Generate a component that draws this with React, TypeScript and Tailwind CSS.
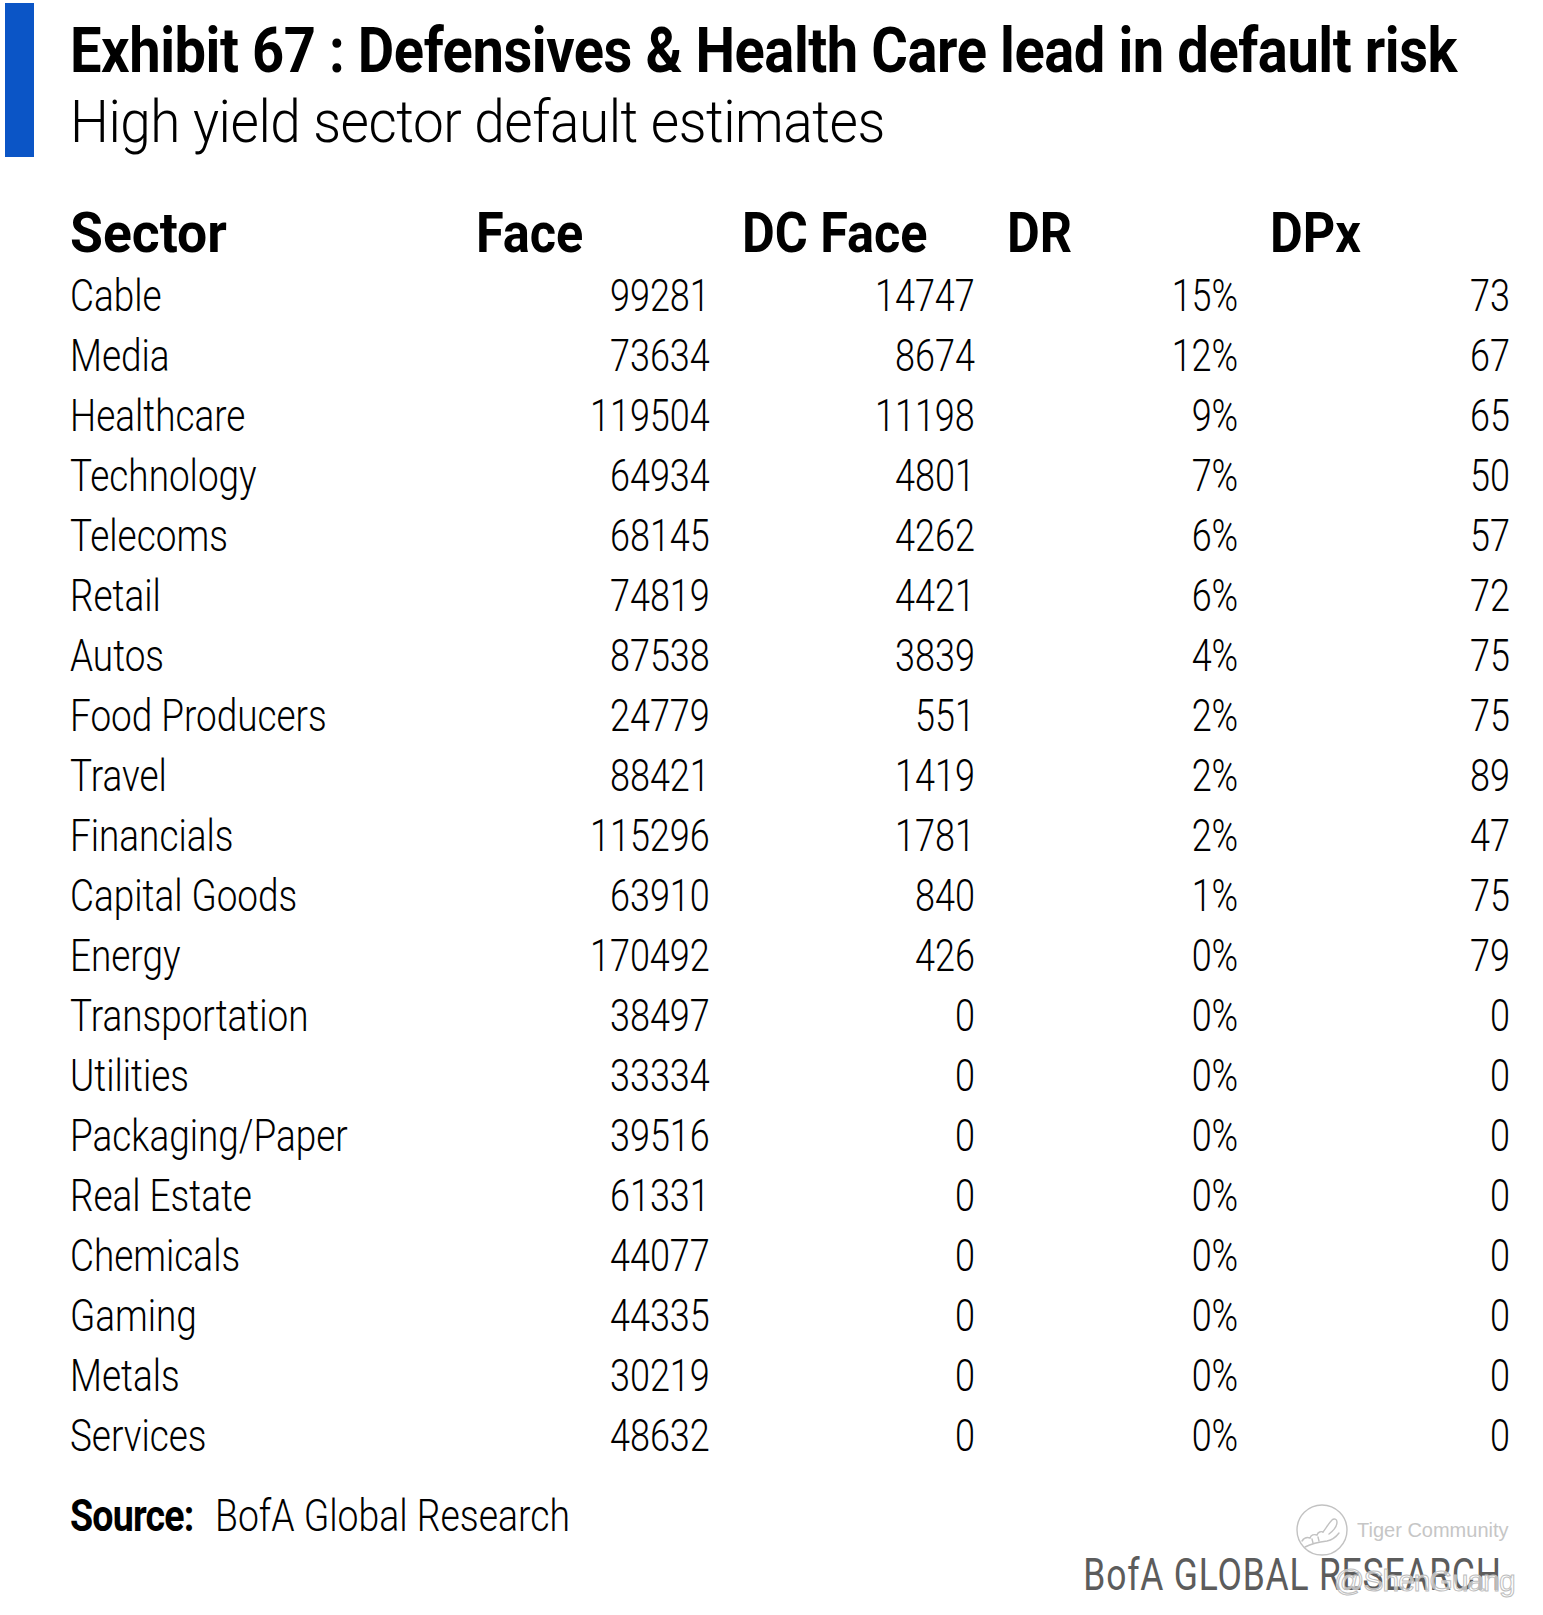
const rows: [string, string, string, string, string][] = [
  ["Cable", "99281", "14747", "15%", "73"],
  ["Media", "73634", "8674", "12%", "67"],
  ["Healthcare", "119504", "11198", "9%", "65"],
  ["Technology", "64934", "4801", "7%", "50"],
  ["Telecoms", "68145", "4262", "6%", "57"],
  ["Retail", "74819", "4421", "6%", "72"],
  ["Autos", "87538", "3839", "4%", "75"],
  ["Food Producers", "24779", "551", "2%", "75"],
  ["Travel", "88421", "1419", "2%", "89"],
  ["Financials", "115296", "1781", "2%", "47"],
  ["Capital Goods", "63910", "840", "1%", "75"],
  ["Energy", "170492", "426", "0%", "79"],
  ["Transportation", "38497", "0", "0%", "0"],
  ["Utilities", "33334", "0", "0%", "0"],
  ["Packaging/Paper", "39516", "0", "0%", "0"],
  ["Real Estate", "61331", "0", "0%", "0"],
  ["Chemicals", "44077", "0", "0%", "0"],
  ["Gaming", "44335", "0", "0%", "0"],
  ["Metals", "30219", "0", "0%", "0"],
  ["Services", "48632", "0", "0%", "0"],
];

// the report font is a condensed face; squeeze Roboto horizontally to match
const cols = "grid grid-cols-[374px_234px_233px_231px_240px] gap-x-[32px]";
const narrowL = "inline-block whitespace-nowrap origin-left scale-x-[0.82]";
const narrowR = "inline-block whitespace-nowrap origin-right scale-x-[0.8]";
const headCell = "inline-block whitespace-nowrap origin-left scale-x-[0.9]";

function TigerLogo() {
  return (
    <svg width="54" height="54" viewBox="0 0 54 54" fill="none" stroke="#c2c2c2" strokeWidth="1.4" strokeLinecap="round">
      <circle cx="27" cy="27" r="25" />
      <path d="M7 38c2-3 5-4 8-3 1-3 4-4 7-3 1-3 4-4 6-3" />
      <path d="M28 29c3-4 6-9 9-12 2-2 5-1 5 2 0 4-4 9-8 12" />
      <path d="M10 44c6-3 14-5 22-6 5-1 9-4 12-8" />
      <path d="M17 36l1 4M23 34l1 4" />
    </svg>
  );
}

export default function App() {
  return (
    <div className="relative h-[1615px] w-[1543px] overflow-hidden bg-white font-['Roboto',sans-serif] text-black">
      <div className="flex h-[157px]">
        <div className="ml-[5px] mt-[3px] h-[154px] w-[29px] shrink-0 bg-[#0b55c6]" />
        <div className="ml-[36px] pt-[17px]">
          <h1 className="text-[63px] font-bold leading-[68px] tracking-[-0.5px]">
            <span className="inline-block whitespace-nowrap origin-left scale-x-[0.89]">
              Exhibit 67 : Defensives &amp; Health Care lead in default risk
            </span>
          </h1>
          <p className="mt-[3px] text-[60px] font-light leading-[68px] tracking-[-0.5px]">
            <span className="inline-block whitespace-nowrap origin-left scale-x-[0.915]">High yield sector default estimates</span>
          </p>
        </div>
      </div>

      <div className="mt-[46px] pl-[70px]">
        <div className={`${cols} text-[56px] font-bold leading-[60px]`}>
          <div><span className="inline-block whitespace-nowrap origin-left scale-x-[0.955]">Sector</span></div>
          <div><span className={headCell}>Face</span></div>
          <div><span className={headCell}>DC Face</span></div>
          <div><span className={headCell}>DR</span></div>
          <div><span className={headCell}>DPx</span></div>
        </div>
        <div className="mt-[3px] text-[45px] font-light leading-[60px]">
          {rows.map((r) => (
            <div key={r[0]} className={cols}>
              <div><span className={narrowL}>{r[0]}</span></div>
              <div className="text-right"><span className={narrowR}>{r[1]}</span></div>
              <div className="text-right"><span className={narrowR}>{r[2]}</span></div>
              <div className="text-right"><span className={narrowR}>{r[3]}</span></div>
              <div className="text-right"><span className={narrowR}>{r[4]}</span></div>
            </div>
          ))}
        </div>
        <div className="mt-[20px] flex text-[45px] leading-[60px]">
          <span className="inline-block w-[145px] whitespace-nowrap origin-left scale-x-[0.835] font-bold tracking-[-1px]">Source:</span>
          <span className="inline-block whitespace-nowrap origin-left scale-x-[0.83] font-light">BofA Global Research</span>
        </div>
      </div>

      <div className="mt-[3px] flex justify-end pr-[41px]">
        <span className="inline-block whitespace-nowrap origin-right scale-x-[0.805] text-[44px] leading-[52px] tracking-[1px] text-[#5c5c5c]">
          BofA GLOBAL RESEARCH
        </span>
      </div>

      <div className="absolute left-[1295px] top-[1503px] flex items-center gap-[8px]">
        <TigerLogo />
        <span className="font-['Liberation_Sans',sans-serif] text-[20px] text-[#c6c6c6]">Tiger Community</span>
      </div>
      <div className="absolute left-[1334px] top-[1563px] font-['Liberation_Sans',sans-serif] text-[30px] leading-[36px] tracking-[-1px] text-white/60 [-webkit-text-stroke:1px_#bdbdbd]">
        @ShenGuang
      </div>
    </div>
  );
}
